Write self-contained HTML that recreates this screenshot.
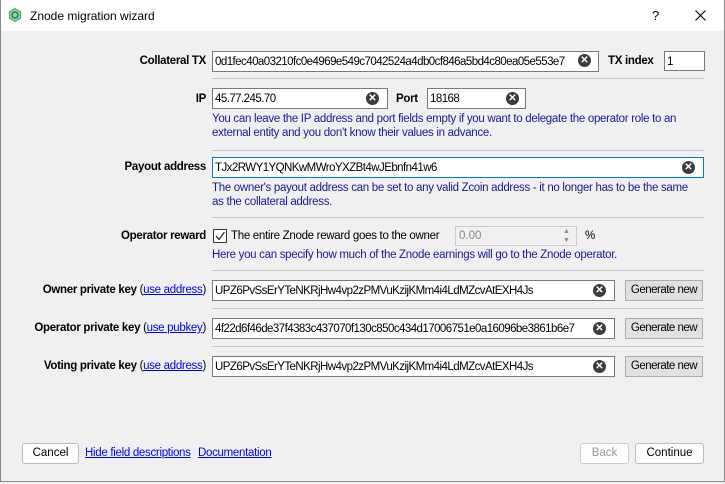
<!DOCTYPE html>
<html><head><style>
*{box-sizing:border-box;margin:0;padding:0}
body{width:725px;height:484px;background:#f0f0f0;font-family:"Liberation Sans",sans-serif;font-size:11.5px;color:#000;position:relative;overflow:hidden}
.a{position:absolute;white-space:nowrap}
.win{position:absolute;left:0;top:0;width:725px;height:482px;border:1px solid #888;border-top:none}
.title{position:absolute;left:1px;top:0;width:723px;height:31px;background:#fff}
.lbl{position:absolute;font-weight:bold;text-align:right;white-space:nowrap;letter-spacing:-0.3px}
.in{position:absolute;background:#fff;border:1px solid #7a7a7a;height:21px;padding:4px 0 0 2px;white-space:nowrap;overflow:hidden;letter-spacing:-0.55px}
.x{position:absolute;width:13px;height:13px;border-radius:50%;background:#3c3c3c;color:#fff;font-size:10px;line-height:13px;text-align:center;font-weight:bold}
.help{position:absolute;color:#1a1a8c;left:212px;white-space:nowrap;letter-spacing:-0.3px;line-height:14px}
.sep{position:absolute;left:212px;width:492px;height:1px;background:#c8c8c8}
.btn{position:absolute;background:#e1e1e1;border:1px solid #adadad;text-align:center;height:21px;line-height:19px;letter-spacing:-0.5px}
.wbtn{position:absolute;background:#fdfdfd;border:1px solid #bdbdbd;border-radius:3px;text-align:center;height:21px;line-height:19px}
a{color:#0000ee;text-decoration:underline}
</style></head><body>
<div class="win"></div>
<div class="title"></div>
<svg class="a" style="left:8px;top:8px" width="14" height="14" viewBox="0 0 14 14"><polygon points="7,0.5 12.6,3.8 12.6,10.2 7,13.5 1.4,10.2 1.4,3.8" fill="#8ed6a8" stroke="#3aa56a"/><circle cx="7" cy="7" r="3" fill="none" stroke="#1f7a46" stroke-width="1.4"/></svg>
<div class="a" style="left:30px;top:9px;font-size:12px">Znode migration wizard</div>
<div class="a" style="left:652px;top:8px;font-size:13px">?</div>
<svg class="a" style="left:695px;top:10px" width="11" height="11"><path d="M0.5 0.5L10.5 10.5M10.5 0.5L0.5 10.5" stroke="#000" stroke-width="1.1"/></svg>

<div class="lbl" style="right:519px;top:55px">Collateral TX</div>
<div class="in" style="left:212px;top:51px;width:387px">0d1fec40a03210fc0e4969e549c7042524a4db0cf846a5bd4c80ea05e553e7</div>
<div class="x" style="left:578px;top:54px">✕</div>
<div class="lbl" style="left:608px;top:55px">TX index</div>
<div class="in" style="left:664px;top:51px;width:41px;height:20px">1</div>
<div class="sep" style="top:78px"></div>

<div class="lbl" style="right:519px;top:93px">IP</div>
<div class="in" style="left:212px;top:88px;width:176px">45.77.245.70</div>
<div class="x" style="left:366px;top:92px">✕</div>
<div class="lbl" style="left:396px;top:93px">Port</div>
<div class="in" style="left:427px;top:88px;width:99px">18168</div>
<div class="x" style="left:506px;top:92px">✕</div>
<div class="help" style="top:112px">You can leave the IP address and port fields empty if you want to delegate the operator role to an<br>external entity and you don't know their values in advance.</div>
<div class="sep" style="top:150px"></div>

<div class="lbl" style="right:519px;top:161px">Payout address</div>
<div class="in" style="left:212px;top:157px;width:492px;border-color:#0078d7">TJx2RWY1YQNKwMWroYXZBt4wJEbnfn41w6</div>
<div class="x" style="left:682px;top:161px">✕</div>
<div class="help" style="top:181px">The owner's payout address can be set to any valid Zcoin address - it no longer has to be the same<br>as the collateral address.</div>
<div class="sep" style="top:217px"></div>

<div class="lbl" style="right:519px;top:230px">Operator reward</div>
<div class="a" style="left:213px;top:229px;width:14px;height:14px;border:1px solid #333;background:#fff"></div>
<svg class="a" style="left:215px;top:231px" width="10" height="10"><path d="M1 5L4 8.5L9.5 1" fill="none" stroke="#222" stroke-width="1.2"/></svg>
<div class="a" style="left:231px;top:230px;letter-spacing:-0.3px">The entire Znode reward goes to the owner</div>
<div class="a" style="left:455px;top:226px;width:122px;height:20px;border:1px solid #ccc;background:#f0f0f0;color:#888;padding:3px 0 0 3px">0.00</div>
<div class="a" style="left:563px;top:227px;font-size:7px;color:#888;line-height:9px">▲<br>▼</div>
<div class="a" style="left:585px;top:230px">%</div>
<div class="help" style="top:248px">Here you can specify how much of the Znode earnings will go to the Znode operator.</div>
<div class="sep" style="top:270px"></div>

<div class="lbl" style="right:519px;top:284px">Owner private key <span style="font-weight:normal">(<a>use address</a>)</span></div>
<div class="in" style="left:212px;top:280px;width:403px">UPZ6PvSsErYTeNKRjHw4vp2zPMVuKzijKMm4i4LdMZcvAtEXH4Js</div>
<div class="x" style="left:593px;top:284px">✕</div>
<div class="btn" style="left:625px;top:280px;width:78px">Generate new</div>
<div class="sep" style="top:308px"></div>

<div class="lbl" style="right:519px;top:322px">Operator private key <span style="font-weight:normal">(<a>use pubkey</a>)</span></div>
<div class="in" style="left:212px;top:318px;width:403px">4f22d6f46de37f4383c437070f130c850c434d17006751e0a16096be3861b6e7</div>
<div class="x" style="left:593px;top:322px">✕</div>
<div class="btn" style="left:625px;top:318px;width:78px">Generate new</div>
<div class="sep" style="top:346px"></div>

<div class="lbl" style="right:519px;top:360px">Voting private key <span style="font-weight:normal">(<a>use address</a>)</span></div>
<div class="in" style="left:212px;top:356px;width:403px">UPZ6PvSsErYTeNKRjHw4vp2zPMVuKzijKMm4i4LdMZcvAtEXH4Js</div>
<div class="x" style="left:593px;top:360px">✕</div>
<div class="btn" style="left:625px;top:356px;width:78px">Generate new</div>

<div class="wbtn" style="left:22px;top:443px;width:57px">Cancel</div>
<div class="a" style="left:85px;top:447px;letter-spacing:-0.3px"><a>Hide field descriptions</a></div>
<div class="a" style="left:198px;top:447px;letter-spacing:-0.3px"><a>Documentation</a></div>
<div class="wbtn" style="left:580px;top:443px;width:49px;color:#999;border-color:#ccc">Back</div>
<div class="wbtn" style="left:635px;top:443px;width:69px">Continue</div>
</body></html>
